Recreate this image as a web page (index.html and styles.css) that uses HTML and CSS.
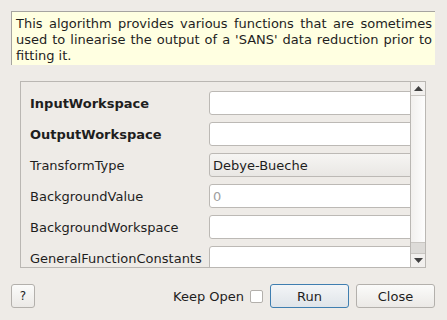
FILE: index.html
```html
<!DOCTYPE html>
<html lang="en">
<head>
    <meta charset="UTF-8">
    <title>Algorithm Dialog</title>
    <link rel="stylesheet" href="styles.css">
</head>
<body>
    <div class="dialog">
        <div class="description">This algorithm provides various functions that are sometimes used to linearise the output of a 'SANS' data reduction prior to fitting it.</div>

        <div class="panel">
            <div class="props">
                <div class="row"><span class="label bold">InputWorkspace</span><input class="field" type="text"></div>
                <div class="row"><span class="label bold">OutputWorkspace</span><input class="field" type="text"></div>
                <div class="row"><span class="label">TransformType</span><div class="field combo">Debye-Bueche</div></div>
                <div class="row"><span class="label">BackgroundValue</span><input class="field" type="text" placeholder="0"></div>
                <div class="row"><span class="label">BackgroundWorkspace</span><input class="field" type="text"></div>
                <div class="row"><span class="label">GeneralFunctionConstants</span><input class="field" type="text"></div>
            </div>
            <div class="scrollbar">
                <div class="sb-btn"><svg width="9" height="5" viewBox="0 0 9 5"><polygon points="0,5 9,5 4.5,0" fill="#404040"/></svg></div>
                <div class="sb-handle"></div>
                <div class="sb-groove"></div>
                <div class="sb-btn"><svg width="9" height="5" viewBox="0 0 9 5"><polygon points="0,0 9,0 4.5,5" fill="#404040"/></svg></div>
            </div>
        </div>

        <div class="footer">
            <button class="btn help">?</button>
            <div class="spacer"></div>
            <label class="keep">Keep Open <span class="check"></span></label>
            <button class="btn run">Run</button>
            <button class="btn close">Close</button>
        </div>
    </div>
</body>
</html>
```
FILE: styles.css
```css
body { margin: 0; background: #eeebe7; font-family: "DejaVu Sans", sans-serif; font-size: 13px; color: #1e1e1e; }

.dialog { width: 447px; height: 320px; box-sizing: border-box; padding: 11px 12px 0 11px; }

.description {
    height: 54px; box-sizing: border-box;
    background: #ffffe1;
    border-left: 1px solid #a6a4a0; border-top: 1px solid #a6a4a0;
    padding: 4px 3px 0 4px;
    line-height: 16px; text-align: justify;
}

.panel {
    margin: 16px 9px 0 9px;
    height: 187px; box-sizing: border-box;
    border: 1px solid #bab7b3;
    display: flex;
}

.props { flex: 1; overflow: hidden; padding: 9px 0 0 9px; display: flex; flex-direction: column; gap: 7px; }
.row { display: flex; align-items: center; height: 24px; flex-shrink: 0; }
.label { width: 179px; flex-shrink: 0; white-space: nowrap; }
.bold { font-weight: bold; }

.field {
    width: 208px; height: 24px; box-sizing: border-box; flex-shrink: 0;
    border: 1px solid #bcb9b5; border-radius: 3px; background: #fff;
    font: inherit; padding: 0 3px; outline: none;
}
.field::placeholder { color: #a0a0a0; }
.combo { display: flex; align-items: center; background: linear-gradient(#f6f5f3, #e9e7e4); padding-left: 3px; }

.scrollbar { width: 14px; border-left: 1px solid #bab7b3; display: flex; flex-direction: column; flex-shrink: 0; }
.sb-btn { height: 14px; display: flex; align-items: center; justify-content: center; background: #f2f0ee; flex-shrink: 0; }
.sb-btn:first-child { border-bottom: 1px solid #c9c6c2; height: 13px; }
.sb-btn:last-child { border-top: 1px solid #c9c6c2; height: 13px; }
.sb-handle { flex: 1; background: linear-gradient(to right, #f2f0ee, #fdfdfd); }
.sb-groove { height: 10px; background: #dddbd8; border-top: 1px solid #c9c6c2; }

.footer { display: flex; align-items: center; margin-top: 16px; height: 24px; }
.spacer { flex: 1; }
.btn {
    height: 24px; box-sizing: border-box; font: inherit; color: #1e1e1e;
    border: 1px solid #b3b0ac; border-radius: 3px;
    background: linear-gradient(#fbfbfa, #ebe9e6);
    padding: 0;
}
.help { width: 24px; font-size: 12px; }
.keep { display: flex; align-items: center; gap: 6px; margin-right: 7px; }
.check { width: 13px; height: 13px; box-sizing: border-box; border: 1px solid #b3b0ac; border-radius: 2px; background: #fff; }
.run { width: 79px; margin-right: 7px; border-color: #3f7eb0; background: linear-gradient(#f3f5f7, #dfe4e9); }
.close { width: 79px; }
```
